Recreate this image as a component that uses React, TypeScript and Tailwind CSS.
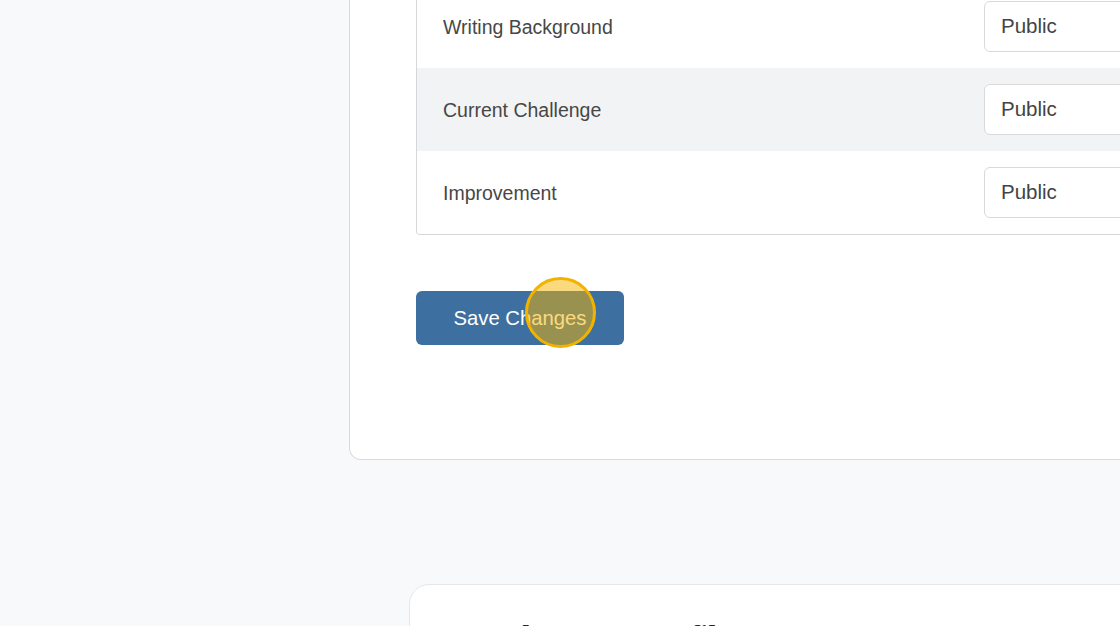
import React from 'react';

const fields = ['Writing Background', 'Current Challenge', 'Improvement'];

const App: React.FC = () => {
  return (
    <div className="w-[1120px] h-[626px] overflow-hidden bg-[#f8f9fb] font-['Liberation_Sans',Arial,sans-serif]">
      {/* Privacy settings card */}
      <div className="ml-[349px] w-[900px] bg-white border-x border-b border-[#d9dadd] rounded-bl-[12px] pl-[66px] pb-[114px]">
        <div className="-mt-[15px] w-[800px] border-x border-b border-[#d6d7da] rounded-bl-[4px] overflow-hidden">
          {fields.map((f, i) => (
            <div
              key={f}
              className={`flex items-center justify-between h-[83px] pl-[26px] pr-[26px] ${i === 1 ? 'bg-[#f2f3f5]' : 'bg-white'}`}
            >
              <span className="text-[19.5px] text-[#474747] pt-[2px]">{f}</span>
              <div className="w-[205px] h-[51px] bg-white border border-[#d9d9d9] rounded-[6px] flex items-center pl-4 text-[20.5px] text-[#444]">
                Public
              </div>
            </div>
          ))}
        </div>

        <div className="mt-[56px] relative w-[208px]">
          <button className="w-[208px] h-[54px] rounded-[6px] bg-[#3d6fa0] text-white text-[20.3px]">
            Save Changes
          </button>
          {/* click highlight */}
          <div className="absolute left-[109px] top-[-14px] w-[71px] h-[71px] rounded-full border-[3px] border-[#f2b300] bg-[rgba(245,180,0,0.5)]" />
        </div>
      </div>

      {/* Next card */}
      <div className="mt-[124px] ml-[409px] w-[800px] h-[200px] bg-white border border-[#e6e7ea] rounded-tl-[20px] pl-[34px] pt-[33px]">
        <h2 className="font-['Liberation_Serif',serif] font-bold text-[30px] leading-[36px] text-[#1b2741]">
          Complete Your Profile
        </h2>
      </div>
    </div>
  );
};

export default App;
